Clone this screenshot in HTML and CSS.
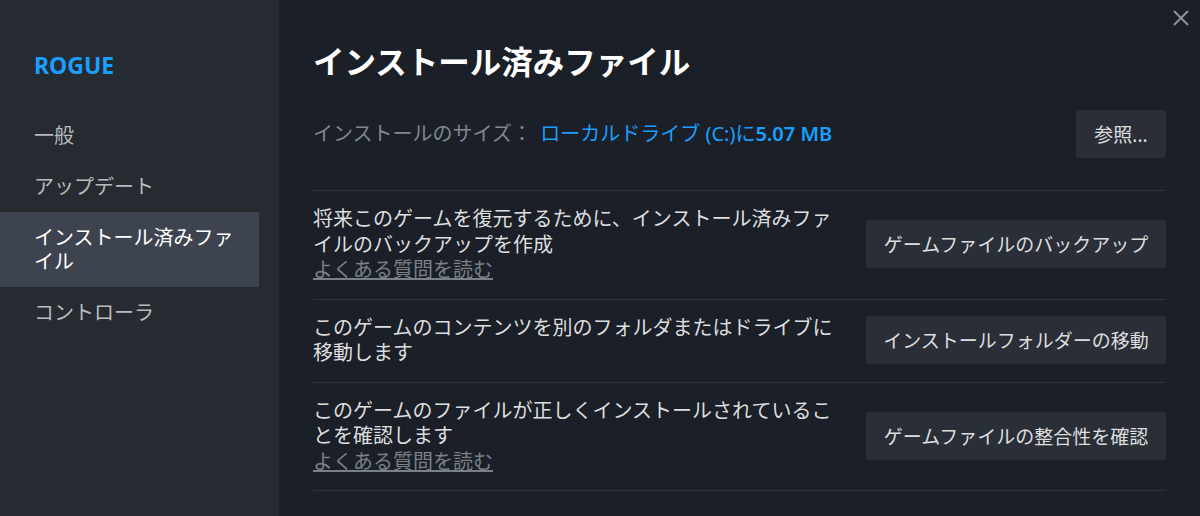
FILE: index.html
```html
<!DOCTYPE html>
<html lang="ja">
  <head>
    <title>ROGUE - インストール済みファイル</title>
    <link rel="stylesheet" href="styles.css">
  </head>
  <body>
    <div class="window">
      <aside class="sidebar">
        <div class="game-name">ROGUE</div>
        <ul class="nav">
          <li>一般</li>
          <li>アップデート</li>
          <li class="active">インストール済みファイル</li>
          <li>コントローラ</li>
        </ul>
      </aside>

      <main class="content">
        <h1>インストール済みファイル</h1>

        <div class="size-row">
          <div class="size-info">
            <span class="size-label">インストールのサイズ：</span>
            <span class="size-value">ローカルドライブ (C:)に<b>5.07 MB</b></span>
          </div>
          <button class="btn btn-small">参照...</button>
        </div>

        <div class="option">
          <div class="desc">
            将来このゲームを復元するために、インストール済みファイルのバックアップを作成
            <a class="faq" href="#">よくある質問を読む</a>
          </div>
          <button class="btn">ゲームファイルのバックアップ</button>
        </div>

        <div class="option">
          <div class="desc">
            このゲームのコンテンツを別のフォルダまたはドライブに移動します
          </div>
          <button class="btn">インストールフォルダーの移動</button>
        </div>

        <div class="option">
          <div class="desc">
            このゲームのファイルが正しくインストールされていることを確認します
            <a class="faq" href="#">よくある質問を読む</a>
          </div>
          <button class="btn">ゲームファイルの整合性を確認</button>
        </div>
      </main>

      <!-- close button -->
      <div class="close">
        <svg width="16" height="16" viewBox="0 0 16 16">
          <path d="M1 1 L15 15 M15 1 L1 15" stroke="#8b929a" stroke-width="2" fill="none"/>
        </svg>
      </div>
    </div>
  </body>
</html>
```

FILE: styles.css
```css
* {
  box-sizing: border-box;
}
body {
  margin: 0;
  background-color: #1b1f27;
  font-family: "Noto Sans", "Noto Sans CJK JP", sans-serif;
  color: #dcdedf;
}
.window {
  display: flex;
  height: 516px;
  position: relative;
  overflow: hidden;
}
.sidebar {
  width: 279px;
  flex-shrink: 0;
  background-color: #262a31;
  padding: 50px 20px 0 0;
}
.game-name {
  padding-left: 34px;
  font-size: 23px;
  line-height: 30px;
  font-weight: bold;
  color: #1a9fff;
  margin-bottom: 30px;
}
.nav {
  list-style: none;
  margin: 0;
  padding: 0;
}
.nav li {
  padding: 13px 20px 13px 34px;
  font-size: 20px;
  line-height: 25px;
  color: #b8bcbf;
}
.nav li.active {
  background-color: #3d4450;
  color: #ffffff;
  line-height: 24px;
  padding-top: 14px;
  padding-bottom: 13px;
}
.content {
  flex: 1;
  padding: 40px 34px 0 34px;
}
h1 {
  margin: 0;
  font-size: 31.5px;
  line-height: 44px;
  font-weight: bold;
  color: #ffffff;
}
.size-row {
  display: flex;
  align-items: center;
  justify-content: space-between;
  margin-top: 26px;
  padding-bottom: 32px;
  border-bottom: 1px solid #2e333b;
}
.size-info {
  font-size: 20px;
  line-height: 26px;
}
.size-label {
  color: #80878f;
}
.size-value {
  color: #1a9fff;
  margin-left: 3px;
}
.size-value b {
  font-weight: 600;
}
.btn {
  flex-shrink: 0;
  width: 300px;
  height: 48px;
  border: none;
  border-radius: 3px;
  background-color: #2a2e37;
  color: #dcdedf;
  font-family: "Noto Sans", "Noto Sans CJK JP", sans-serif;
  font-size: 19px;
}
.btn-small {
  width: 90px;
}
.option {
  display: flex;
  align-items: center;
  gap: 24px;
  padding: 15px 0 16px;
  border-bottom: 1px solid #2e333b;
}
.desc {
  flex: 1;
  font-size: 20px;
  line-height: 25.5px;
  color: #dcdedf;
}
.faq {
  display: block;
  color: #7a8088;
  text-decoration: underline;
}
.close {
  position: absolute;
  top: 10px;
  right: 11px;
  width: 16px;
  height: 16px;
}
.close svg {
  display: block;
}
```
